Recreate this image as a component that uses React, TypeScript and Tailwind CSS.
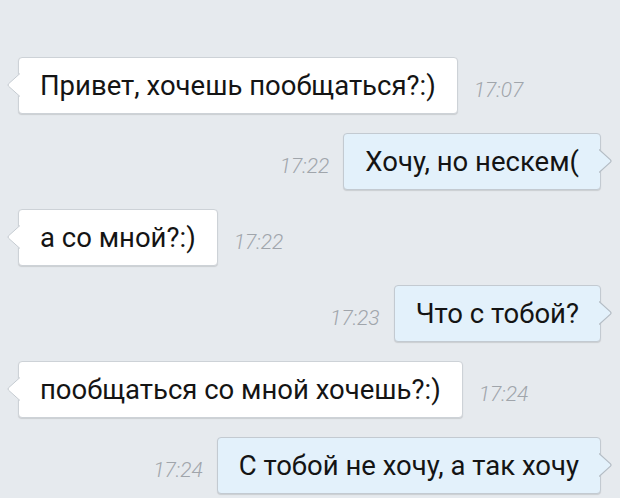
import React from "react";

type Msg = {
  text: string;
  time: string;
  mine: boolean;
};

const messages: Msg[] = [
  { text: "Привет, хочешь пообщаться?:)", time: "17:07", mine: false },
  { text: "Хочу, но нескем(", time: "17:22", mine: true },
  { text: "а со мной?:)", time: "17:22", mine: false },
  { text: "Что с тобой?", time: "17:23", mine: true },
  { text: "пообщаться со мной хочешь?:)", time: "17:24", mine: false },
  { text: "С тобой не хочу, а так хочу", time: "17:24", mine: true },
];

function Tail({ mine }: { mine: boolean }) {
  // little arrow on the side of the bubble
  const fill = mine ? "#e3f1fb" : "#ffffff";
  const stroke = mine ? "#b4bcc4" : "#c4cad0";
  return (
    <svg
      width="13"
      height="24"
      viewBox="0 0 13 24"
      className={`absolute top-[15px] z-10 ${mine ? "left-[calc(100%-1px)]" : "right-[calc(100%-1px)]"}`}
    >
      {mine ? (
        <>
          <path d="M0 0 L11.5 10.8 Q12.5 12 11.5 13.2 L0 24 Z" fill={fill} />
          <path
            d="M0 0.5 L11.5 10.8 Q12.5 12 11.5 13.2 L0 23.5"
            fill="none"
            stroke={stroke}
            strokeWidth="1.2"
          />
        </>
      ) : (
        <>
          <path d="M13 0 L1.5 10.8 Q0.5 12 1.5 13.2 L13 24 Z" fill={fill} />
          <path
            d="M13 0.5 L1.5 10.8 Q0.5 12 1.5 13.2 L13 23.5"
            fill="none"
            stroke={stroke}
            strokeWidth="1"
          />
        </>
      )}
    </svg>
  );
}

function Bubble({ msg }: { msg: Msg }) {
  return (
    <div
      className={`relative h-[57px] flex items-center px-[21px] rounded-[4px] border shadow-[0_1px_1px_rgba(0,0,0,0.12)] ${
        msg.mine ? "bg-[#e3f1fb] border-[#c3cad1]" : "bg-white border-[#cdd2d7]"
      }`}
    >
      <Tail mine={msg.mine} />
      <span className="text-[27.5px] leading-none text-[#141414] whitespace-nowrap">
        {msg.text}
      </span>
    </div>
  );
}

function Time({ value }: { value: string }) {
  return (
    <span className="mt-[9px] text-[21px] leading-none font-light italic text-[#a0a5ab]">
      {value}
    </span>
  );
}

export default function App() {
  return (
    <div
      className="w-[620px] h-[498px] overflow-hidden bg-[#e6eaee] pt-[57px] flex flex-col gap-[19px]"
      style={{ fontFamily: "Roboto, 'Noto Sans', sans-serif" }}
    >
      {messages.map((m, i) =>
        m.mine ? (
          <div key={i} className="flex items-center justify-end gap-[14px] pr-[19px]">
            <Time value={m.time} />
            <Bubble msg={m} />
          </div>
        ) : (
          <div key={i} className="flex items-center gap-[16px] pl-[18px]">
            <Bubble msg={m} />
            <Time value={m.time} />
          </div>
        )
      )}
    </div>
  );
}
